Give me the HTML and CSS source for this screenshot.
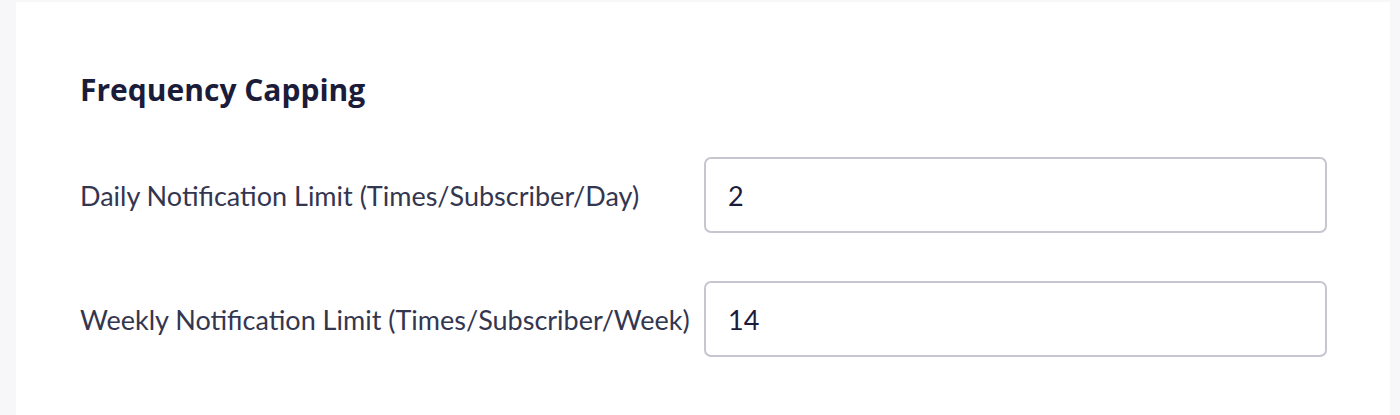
FILE: index.html
```html
<!DOCTYPE html>
<html lang="en">
<head>
    <meta charset="UTF-8">
    <meta name="viewport" content="width=device-width, initial-scale=1.0">
    <title>Frequency Capping</title>
    <link rel="stylesheet" href="styles.css">
</head>
<body>
    <div class="card">
        <h2 class="card-title">Frequency Capping</h2>

        <form class="cap-form">
            <label for="daily">Daily Notification Limit (Times/Subscriber/Day)</label>
            <input type="text" id="daily" name="daily" value="2">

            <label for="weekly">Weekly Notification Limit (Times/Subscriber/Week)</label>
            <input type="text" id="weekly" name="weekly" value="14">
        </form>
    </div>
</body>
</html>
```

FILE: styles.css
```css
body{
    margin: 0;
    height: 415px;
    overflow: hidden;
    background-color: #f7f7fa;
    font-family: Lato, "Open Sans", sans-serif;
}
.card{
    margin: 2px 10px 0 16px;
    height: 413px;
    padding: 0 63px 0 64px;
    background-color: #fff;
    box-sizing: border-box;
    overflow: hidden;
}
.card-title{
    margin: 0;
    padding-top: 68px;
    font-family: "Open Sans", Lato, sans-serif;
    font-size: 30px;
    font-weight: 700;
    line-height: 40px;
    color: #1b1c3a;
}
.cap-form{
    display: grid;
    grid-template-columns: 624px 1fr;
    row-gap: 48px;
    align-items: center;
    margin-top: 47px;
}
label{
    font-size: 27px;
    color: #34364f;
}
input{
    height: 76px;
    padding: 0 22px;
    border: 2px solid #c6c6d0;
    border-radius: 7px;
    box-sizing: border-box;
    font-family: inherit;
    font-size: 27px;
    color: #1b1c3a;
    outline: none;
}
```
